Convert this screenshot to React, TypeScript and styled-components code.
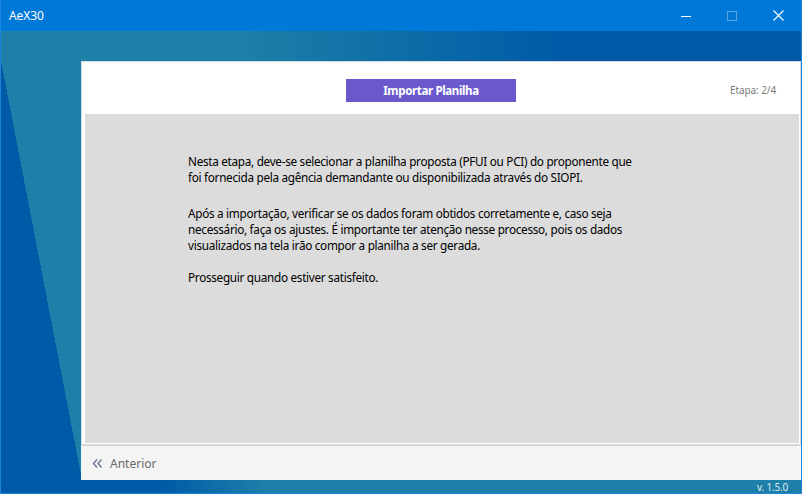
import React from 'react'
import styled, { createGlobalStyle } from 'styled-components'

const GlobalStyle = createGlobalStyle`
  html, body {
    margin: 0;
    padding: 0;
    background: #ffffff;
  }
  body {
    font-family: 'Noto Sans', 'Open Sans', 'DejaVu Sans', sans-serif;
  }
  * {
    box-sizing: border-box;
  }
`

const Window = styled.div`
  width: 802px;
  height: 494px;
  display: flex;
  flex-direction: column;
  background: #0078d7;
  border: 1px solid #1a84da;
  border-top: none;
  overflow: hidden;
`

const TitleBar = styled.div`
  height: 31px;
  flex: none;
  display: flex;
  align-items: center;
  background: #0078d7;
  color: #ffffff;
`

const Title = styled.div`
  flex: 1;
  padding-left: 8px;
  font-size: 12px;
  letter-spacing: -0.1px;
`

const WinButton = styled.div<{ disabled?: boolean }>`
  width: 46px;
  height: 31px;
  display: flex;
  align-items: center;
  justify-content: center;
  opacity: ${({ disabled }) => (disabled ? 0.35 : 1)};
`

const Desktop = styled.div`
  flex: 1;
  display: flex;
  flex-direction: column;
  background-color: #1e7fa8;
  background-image:
    linear-gradient(to right, #1e7fa8 0, #1e7fa8 240px, #005aa7 560px),
    linear-gradient(to right, #005aa7 0, #005aa7 160px, #1e7fa8 265px),
    linear-gradient(to top right, #005aa7 50%, transparent 50%);
  background-size: 100% 30px, 100% 13px, 81px 419px;
  background-position: 0 0, 0 100%, 0 30px;
  background-repeat: no-repeat;
`

const Card = styled.div`
  flex: 1;
  margin: 30px 0 0 80px;
  display: flex;
  flex-direction: column;
`

const Panel = styled.div`
  flex: 1;
  display: flex;
  flex-direction: column;
  background: #ffffff;
  border-top: 1px solid #d6d6d6;
  border-left: 1px solid #d6d6d6;
  border-right: 1px solid #d6d6d6;
  border-bottom: 2px solid #d8d8d8;
  padding: 0 1px 1px 3px;
`

const Header = styled.div`
  height: 52px;
  flex: none;
  display: grid;
  grid-template-columns: 1fr 170px 1fr;
  align-items: center;
  padding: 4px 23px 0 1px;
`

const StepButton = styled.div`
  grid-column: 2;
  height: 23px;
  display: flex;
  align-items: center;
  justify-content: center;
  background: #6a58cc;
  color: #ffffff;
  font-weight: 700;
  font-size: 11.5px;
  letter-spacing: -0.35px;
`

const StepLabel = styled.div`
  grid-column: 3;
  justify-self: end;
  color: #7a7a7a;
  font-size: 10px;
  letter-spacing: -0.1px;
`

const Content = styled.div`
  flex: 1;
  background: #dcdcdc;
  padding: 39px 0 0 103px;
  color: #000000;
  font-size: 11.75px;
  line-height: 16px;
  letter-spacing: -0.3px;
`

const Paragraph = styled.p<{ gap?: number }>`
  margin: 0 0 ${({ gap }) => gap ?? 16}px 0;
  white-space: nowrap;
`

const Footer = styled.div`
  height: 34px;
  flex: none;
  display: flex;
  align-items: center;
  gap: 7px;
  padding-left: 11px;
  background: #f4f4f4;
  color: #6a6a6a;
  font-size: 12px;
`

const StatusBar = styled.div`
  height: 13px;
  flex: none;
  display: flex;
  align-items: center;
  justify-content: flex-end;
  padding-right: 13px;
  color: #dfe9f1;
  font-size: 10px;
  letter-spacing: -0.2px;
`

const App: React.FC = () => (
  <>
    <GlobalStyle />
    <Window>
      <TitleBar>
        <Title>AeX30</Title>
        <WinButton>
          <svg width="10" height="10" viewBox="0 0 10 10">
            <path d="M0 5.5H10" stroke="#fff" strokeWidth="1" />
          </svg>
        </WinButton>
        <WinButton disabled>
          <svg width="10" height="10" viewBox="0 0 10 10">
            <rect x="0.5" y="0.5" width="9" height="9" fill="none" stroke="#fff" strokeWidth="1" />
          </svg>
        </WinButton>
        <WinButton>
          <svg width="11" height="11" viewBox="0 0 11 11">
            <path d="M0.5 0.5L10.5 10.5M10.5 0.5L0.5 10.5" stroke="#fff" strokeWidth="1.1" />
          </svg>
        </WinButton>
      </TitleBar>
      <Desktop>
        <Card>
          <Panel>
            <Header>
              <StepButton>Importar Planilha</StepButton>
              <StepLabel>Etapa: 2/4</StepLabel>
            </Header>
            <Content>
              <Paragraph gap={20}>
                Nesta etapa, deve-se selecionar a planilha proposta (PFUI ou PCI) do proponente que
                <br />
                foi fornecida pela agência demandante ou disponibilizada através do SIOPI.
              </Paragraph>
              <Paragraph>
                Após a importação, verificar se os dados foram obtidos corretamente e, caso seja
                <br />
                necessário, faça os ajustes. É importante ter atenção nesse processo, pois os dados
                <br />
                visualizados na tela irão compor a planilha a ser gerada.
              </Paragraph>
              <Paragraph>Prosseguir quando estiver satisfeito.</Paragraph>
            </Content>
          </Panel>
          <Footer>
            <svg width="11" height="11" viewBox="0 0 11 11">
              <path d="M5 1.5L1.5 5.5L5 9.5M9.5 1.5L6 5.5L9.5 9.5" fill="none" stroke="#5d6b8a" strokeWidth="1.2" />
            </svg>
            Anterior
          </Footer>
        </Card>
        <StatusBar>v. 1.5.0</StatusBar>
      </Desktop>
    </Window>
  </>
)

export default App
